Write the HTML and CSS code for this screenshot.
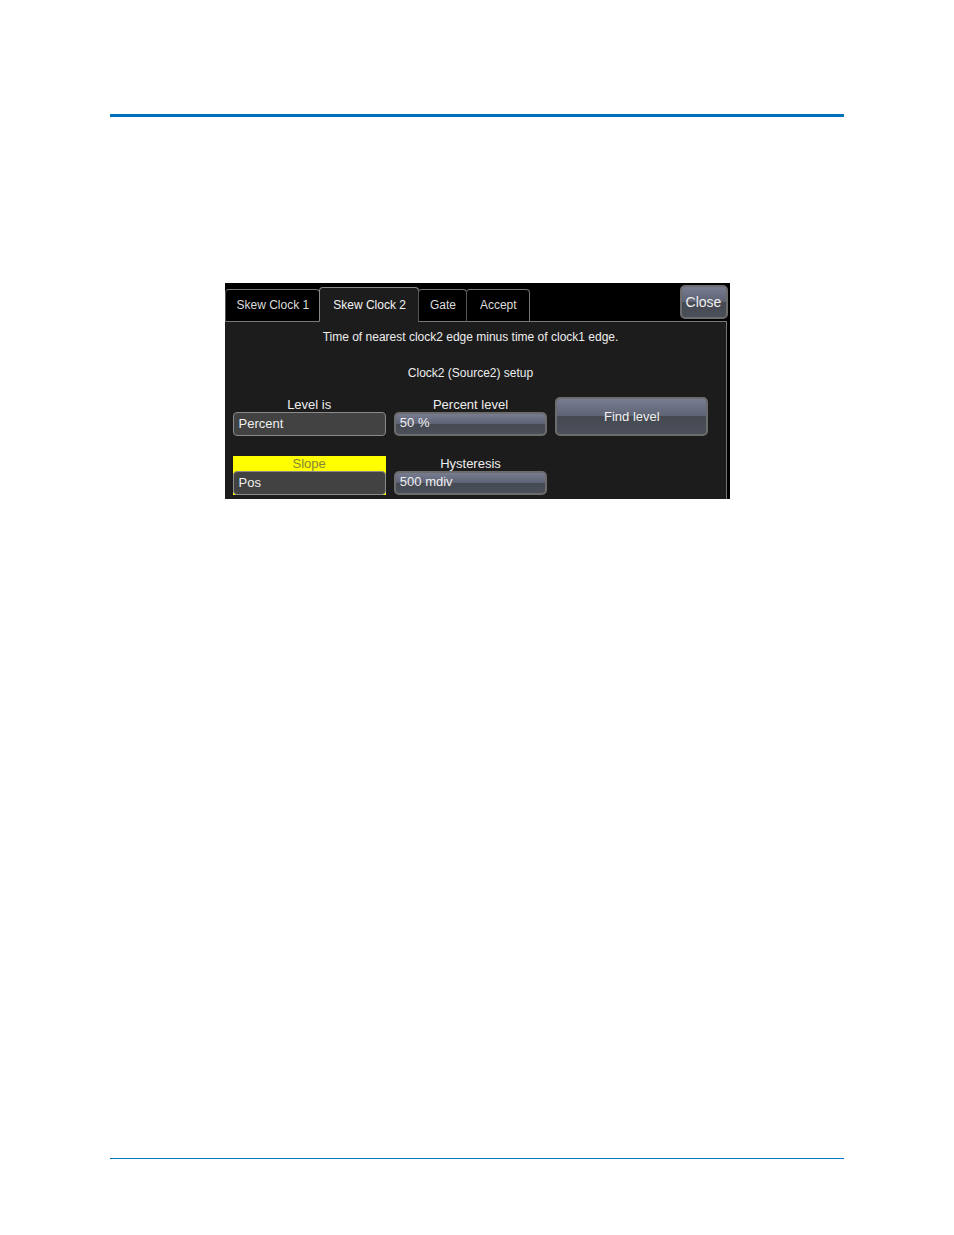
FILE: index.html
```html
<!DOCTYPE html>
<html lang="en">
<head>
<meta charset="utf-8">
<meta name="viewport" content="width=device-width, initial-scale=1">
<title>Skew Clock 2 setup</title>
<link rel="stylesheet" href="styles.css">
</head>
<body>
<div class="page">
  <main class="content">
    <section class="dialog" aria-label="Measurement setup">
      <header class="dialog-bar">
        <div class="tabs" role="tablist">
          <button class="tab" type="button" role="tab">Skew Clock 1</button>
          <button class="tab tab-active" type="button" role="tab" aria-selected="true">Skew Clock 2</button>
          <button class="tab" type="button" role="tab">Gate</button>
          <button class="tab tab-last" type="button" role="tab">Accept</button>
        </div>
        <button class="raised close" type="button">Close</button>
      </header>
      <form class="panel">
        <p class="note">Time of nearest clock2 edge minus time of clock1 edge.</p>
        <p class="note">Clock2 (Source2) setup</p>
        <div class="fields">
          <div class="field">
            <label class="label" for="level-type">Level is</label>
            <select class="control choice" id="level-type"><option>Percent</option></select>
          </div>
          <div class="field">
            <label class="label" for="percent-level">Percent level</label>
            <input class="control raised value" id="percent-level" type="text" value="50 %">
          </div>
          <button class="raised find" type="button">Find level</button>
          <div class="field field-selected">
            <label class="label" for="slope">Slope</label>
            <select class="control choice" id="slope"><option>Pos</option></select>
          </div>
          <div class="field">
            <label class="label" for="hysteresis">Hysteresis</label>
            <input class="control raised value" id="hysteresis" type="text" value="500 mdiv">
          </div>
        </div>
      </form>
    </section>
  </main>
</div>
</body>
</html>
```
FILE: styles.css
```css
* {
  box-sizing: border-box;
}

body {
  margin: 0;
  background: #fff;
  font-family: "Liberation Sans", Arial, sans-serif;
}

button,
input,
select {
  margin: 0;
  font-family: inherit;
}

.page {
  display: flex;
  flex-direction: column;
  min-height: 100vh;
  padding: 114px 110px 76px;
}

.content {
  flex: 1;
  padding-top: 166px;
  border-top: 3px solid #0072bc;
  border-bottom: 1px solid #0078c8;
}

.dialog {
  max-width: 505px;
  margin: 0 auto;
  padding-right: 3px;
  background: #000;
  color: #eee;
}

.dialog-bar {
  display: flex;
  justify-content: space-between;
  align-items: flex-start;
  height: 38px;
}

.tabs {
  display: flex;
  align-items: flex-end;
  height: 39px;
}

.tab {
  height: 33px;
  padding: 0 10px 2px 11px;
  border: 1px solid #777;
  border-left-color: #555;
  border-radius: 4px 4px 0 0;
  background: #000;
  color: #ddd;
  font-size: 12px;
}

.tab + .tab {
  margin-left: -1px;
}

.tab-active {
  height: 35px;
  padding: 0 12px 0 13px;
  border-color: #888;
  border-bottom-color: #1c1c1c;
  background: #1c1c1c;
  color: #f4f4f4;
}

.tab-last {
  padding: 0 12px 2px 13px;
}

.raised {
  border: 2px solid #6c6c6c;
  border-radius: 5px;
  background: linear-gradient(#777c91, #5d6274 50%, #454952 50%, #4b4f59);
  color: #f0f0f0;
}

.close {
  width: 48px;
  height: 34px;
  margin: 2px -1px 0 0;
  padding: 0;
  font-size: 14px;
}

.panel {
  padding: 7px 17px 4px 8px;
  border: 1px solid #777;
  border-width: 1px 1px 0 0;
  background: #1c1c1c;
}

.note {
  margin: 0 0 20px;
  font-size: 12px;
  line-height: 16px;
  text-align: center;
}

.note + .note {
  margin-bottom: 16px;
}

.fields {
  display: grid;
  grid-template-columns: repeat(3, 1fr);
  gap: 20px 8px;
}

.field {
  display: flex;
  flex-direction: column;
}

.field-selected {
  background: #ff0;
}

.label {
  font-size: 13px;
  line-height: 15px;
  text-align: center;
}

.field-selected .label {
  color: #85853a;
}

.control {
  width: 100%;
  height: 24px;
  font-size: 13px;
}

.choice {
  padding: 0 5px 2px;
  border: 1px solid #8a8a8a;
  border-radius: 4px;
  appearance: none;
  background: #424242;
  color: #f0f0f0;
}

.value {
  padding: 0 4px 3px;
}

.find {
  padding: 0;
  font-size: 13px;
}
```
